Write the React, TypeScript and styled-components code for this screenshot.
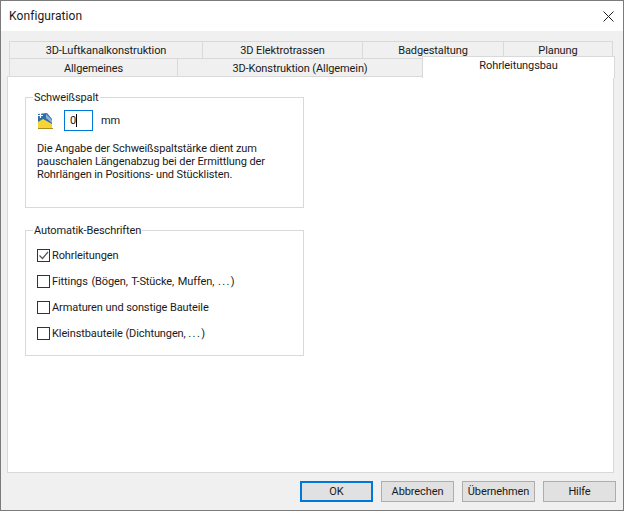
import React from 'react'
import styled, { createGlobalStyle } from 'styled-components'

const GlobalStyle = createGlobalStyle`
  html, body {
    margin: 0;
    padding: 0;
    background: #f0f0f0;
  }
  body {
    font-family: Roboto, "Open Sans", sans-serif;
    font-size: 11px;
    letter-spacing: -0.1px;
    color: #1a1a1a;
  }
`

const Dialog = styled.div`
  width: 624px;
  height: 511px;
  box-sizing: border-box;
  border: 1px solid #7b7b7b;
  background: #f0f0f0;
  display: flex;
  flex-direction: column;
`

const TitleBar = styled.div`
  height: 30px;
  background: #fff;
  display: flex;
  align-items: center;
  justify-content: space-between;
  padding: 0 9px 0 8px;
  font-size: 12px;
  letter-spacing: 0.1px;
`

const Body = styled.div`
  flex: 1;
  display: flex;
  flex-direction: column;
  padding: 10px 6px 0;
  min-height: 0;
`

const TabRow = styled.div<{ $lineHeight: number }>`
  display: flex;
  padding-left: 2px;
  height: 18px;
  line-height: ${p => p.$lineHeight}px;

  & + & {
    margin-top: -1px;
  }
`

const Tab = styled.div<{ $width: number; $active?: boolean }>`
  width: ${p => p.$width}px;
  box-sizing: border-box;
  text-align: center;
  white-space: nowrap;
  border: 1px solid #d9d9d9;
  border-bottom: 0;
  border-left-width: ${p => (p.$active ? 1 : 0)}px;
  background: ${p => (p.$active ? '#fff' : '#f0f0f0')};
  &:first-child {
    border-left-width: 1px;
  }
  ${p =>
    p.$active &&
    `
    position: relative;
    z-index: 1;
    height: 22px;
    margin: -2px 0 0 -1px;
    line-height: 18px;
  `}
`

const Panel = styled.div`
  flex: 1;
  margin-right: 3px;
  background: #fff;
  border: 1px solid #d9d9d9;
  padding: 13px 17px 12px;
  display: flex;
  flex-direction: column;
  align-items: flex-start;
  gap: 15px;
`

const Group = styled.fieldset<{ $height: number }>`
  width: 279px;
  height: ${p => p.$height}px;
  box-sizing: border-box;
  margin: 0;
  padding: 0 0 0 11px;
  border: 1px solid #d9d9d9;

  legend {
    margin-left: -4px;
    padding: 0 1px;
    line-height: 15px;
  }
`

const SlotRow = styled.div`
  display: flex;
  align-items: center;
  gap: 11px;
  margin-top: 5px;
`

const SlotInput = styled.div`
  width: 29px;
  height: 21px;
  box-sizing: border-box;
  border: 1px solid #0078d7;
  display: flex;
  align-items: center;
  padding-left: 5px;

  &::after {
    content: '';
    width: 1px;
    height: 13px;
    background: #000;
  }
`

const Unit = styled.span`
  margin-left: -3px;
`

const Note = styled.p`
  margin: 11px 0 0 0;
  line-height: 13px;
  white-space: pre;
`

const CheckList = styled.div`
  display: flex;
  flex-direction: column;
  gap: 9px;
  margin-top: 9px;
`

const CheckRow = styled.label`
  display: flex;
  align-items: center;
  gap: 2px;
  height: 17px;
  line-height: 17px;
  white-space: pre;
`

const Spaced = styled.span`
  word-spacing: 1px;
`

const Dots = styled.span`
  letter-spacing: 1.4px;
`

const Box = styled.span`
  width: 13px;
  height: 13px;
  box-sizing: border-box;
  border: 1px solid #333;
  background: #fff;
  display: flex;
`

const Footer = styled.div`
  height: 37px;
  box-sizing: border-box;
  display: flex;
  justify-content: flex-end;
  align-items: flex-start;
  gap: 8px;
  padding: 8px 1px 0 0;
`

const Button = styled.button<{ $primary?: boolean }>`
  width: 73px;
  height: 21px;
  box-sizing: border-box;
  padding: 0;
  font: inherit;
  letter-spacing: inherit;
  color: inherit;
  background: #e1e1e1;
  border: ${p => (p.$primary ? '2px solid #0078d7' : '1px solid #adadad')};
`

const Close = () => (
  <svg width="11" height="11" viewBox="0 0 11 11" fill="none" stroke="#222" strokeWidth="1">
    <path d="M0.5 0.5 L10.5 10.5 M10.5 0.5 L0.5 10.5" />
  </svg>
)

const GapIcon = () => (
  <svg width="16" height="18" viewBox="0 0 16 18">
    <path d="M1 2 L10 1 L15 7 L15 12 L1 12 Z" fill="#2f6da8" />
    <path d="M9 2 L15 8 L15 11 L9 6 Z" fill="#8fb3d1" />
    <path d="M1 10 L6 7 L15 12 L15 16 L1 16 Z" fill="#f6d437" />
    <rect x="1" y="16" width="15" height="1" fill="#a98d1c" />
    <path d="M1 3.5 H6 M3.5 1 V6" stroke="#fff" strokeWidth="1.2" />
  </svg>
)

const Check = () => (
  <svg width="11" height="11" viewBox="0 0 11 11" fill="none" stroke="#555" strokeWidth="1.2">
    <path d="M1.5 5.5 L4.5 8.5 L10 2" />
  </svg>
)

const Option = ({ children, checked }: { children: React.ReactNode; checked?: boolean }) => (
  <CheckRow>
    <Box>{checked && <Check />}</Box>
    <span>{children}</span>
  </CheckRow>
)

const App = () => (
  <Dialog>
    <GlobalStyle />
    <TitleBar>
      <span>Konfiguration</span>
      <Close />
    </TitleBar>
    <Body>
      <TabRow $lineHeight={18}>
        <Tab $width={194}>3D-Luftkanalkonstruktion</Tab>
        <Tab $width={160}>3D Elektrotrassen</Tab>
        <Tab $width={141}>Badgestaltung</Tab>
        <Tab $width={109}>Planung</Tab>
      </TabRow>
      <TabRow $lineHeight={20}>
        <Tab $width={169}>Allgemeines</Tab>
        <Tab $width={245}>3D-Konstruktion (Allgemein)</Tab>
        <Tab $width={193} $active>
          Rohrleitungsbau
        </Tab>
      </TabRow>
      <Panel>
        <Group $height={118}>
          <legend>Schweißspalt</legend>
          <SlotRow>
            <GapIcon />
            <SlotInput>0</SlotInput>
            <Unit>mm</Unit>
          </SlotRow>
          <Note>
            {'Die Angabe der Schweißspaltstärke dient zum\npauschalen Längenabzug bei der Ermittlung der\nRohrlängen in Positions- und Stücklisten.'}
          </Note>
        </Group>
        <Group $height={133}>
          <legend>Automatik-Beschriften</legend>
          <CheckList>
            <Option checked>Rohrleitungen</Option>
            <Option>
              <Spaced>
                Fittings (Bögen, T-Stücke, Muffen, <Dots>...</Dots>)
              </Spaced>
            </Option>
            <Option>Armaturen und sonstige Bauteile</Option>
            <Option>
              Kleinstbauteile (Dichtungen, <Dots>...</Dots>)
            </Option>
          </CheckList>
        </Group>
      </Panel>
      <Footer>
        <Button $primary>OK</Button>
        <Button>Abbrechen</Button>
        <Button>Übernehmen</Button>
        <Button>Hilfe</Button>
      </Footer>
    </Body>
  </Dialog>
)

export default App
